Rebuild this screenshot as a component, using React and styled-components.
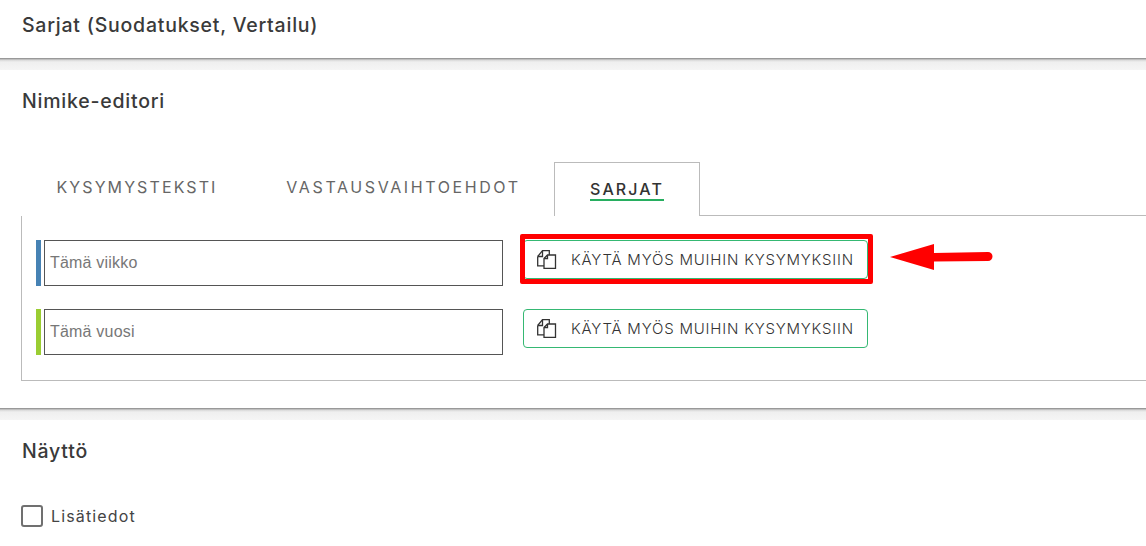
import React from "react";
import styled, { createGlobalStyle } from "styled-components";

const Global = createGlobalStyle`
  html, body { margin: 0; padding: 0; background: #fff; overflow: hidden; }
  body { font-family: Inter, "Liberation Sans", sans-serif; color: #333; }
`;
const Page = styled.div`
  position: relative;
  width: 1146px;
  height: 546px;
  overflow: hidden;
`;
const Section = styled.section`
  background: #fff;
  height: ${p => p.$h}px;
  padding: ${p => p.$top}px 0 0 22px;
  box-sizing: border-box;
`;
const Divider = styled.div`
  height: 12px;
  background: linear-gradient(#a8a8a8 0, #d8d8d8 1px, #efefef 3px, #f5f5f5 100%);
  border-top: 1px solid #999;
  box-sizing: border-box;
`;
const Title = styled.h2`
  margin: 0;
  font-size: 19.5px;
  line-height: 22px;
  font-weight: 500;
  color: #3a3a3a;
  letter-spacing: 0.77px;
`;
const Tabs = styled.div`
  display: flex;
  margin: 50px 0 0 0;
  height: 54px;
  align-items: stretch;
`;
const Tab = styled.div`
  box-sizing: border-box;
  width: ${p => p.$w}px;
  margin-left: ${p => p.$ml || 0}px;
  height: 54px;
  text-align: center;
  font-size: 16px;
  letter-spacing: ${p => p.$spacing || 2.1}px;
  padding-top: 16px;
  line-height: 19px;
  color: ${p => (p.$active ? "#333" : "#666")};
  font-weight: ${p => (p.$active ? 500 : 400)};
  background: #fff;
  position: relative;
  ${p => p.$active && "border: 1px solid #bbb; border-bottom: none; z-index: 1;"}
`;
const TabLabel = styled.span`
  display: inline-block;
  ${p => p.$active && "border-bottom: 2px solid #27ae60; line-height: 20px;"}
`;
const Panel = styled.div`
  box-sizing: border-box;
  margin: -1px 0 0 -1px;
  height: 166px;
  border: 1px solid #bbb;
  border-right: none;
  padding: 24px 0 0 14px;
  display: flex;
  flex-direction: column;
  gap: 23px;
`;
const Row = styled.div`
  display: flex;
  align-items: flex-start;
`;
const ColorBar = styled.div`
  width: 5px;
  height: 46px;
  background: ${p => p.$color};
  margin-right: 3px;
`;
const NameInput = styled.div`
  box-sizing: border-box;
  width: 459px;
  height: 46px;
  border: 1px solid #555;
  display: flex;
  align-items: center;
  padding: 0 0 0 5px;
  font: 16px "Liberation Sans", Arial, sans-serif;
  letter-spacing: 0.2px;
  color: #777;
`;
const CopyButton = styled.button`
  box-sizing: border-box;
  margin-left: 20px;
  width: 345px;
  height: 39px;
  border: 1px solid #35b873;
  border-radius: 4px;
  background: #fff;
  display: flex;
  align-items: center;
  padding: 0 0 0 13px;
  gap: 14px;
  font-family: Inter, sans-serif;
  font-size: 15px;
  font-weight: 300;
  letter-spacing: 0.8px;
  color: #333;
  white-space: nowrap;
`;
const CheckRow = styled.label`
  display: flex;
  align-items: center;
  gap: 8px;
  margin-top: 43px;
  margin-left: -1px;
  font-size: 16px;
  letter-spacing: 1.15px;
  color: #444;
`;
const CheckBox = styled.span`
  box-sizing: border-box;
  width: 22px;
  height: 22px;
  border: 2px solid #707070;
  border-radius: 3px;
`;
const Highlight = styled.div`
  position: absolute;
  left: 520px;
  top: 234px;
  width: 353px;
  height: 50px;
  box-sizing: border-box;
  border: 5px solid #f00;
  border-radius: 2px;
`;
const Arrow = styled.svg`
  position: absolute;
  left: 888px;
  top: 240px;
  width: 106px;
  height: 32px;
`;

const CopyIcon = () => (
  <svg width="20" height="20" viewBox="0 0 20 20" fill="none" stroke="#333" strokeWidth="1.3">
    <path d="M.7 6.5 5.5.7h6.8v4.5" fill="#fff" />
    <path d="M.7 6.5v9.3h6.3" />
    <path d="M.7 6.5h4.8V.7" />
    <path d="M7 8.5 10.5 5h8v13.3H7z" fill="#fff" />
    <path d="M7 8.5h3.5V5" />
  </svg>
);

const Copy = () => (
  <CopyButton>
    <CopyIcon />
    KÄYTÄ MYÖS MUIHIN KYSYMYKSIIN
  </CopyButton>
);

export default function App() {
  return (
    <Page>
      <Global />
      <Section $h={58} $top={14}>
        <Title>Sarjat (Suodatukset, Vertailu)</Title>
      </Section>
      <Divider />
      <Section $h={338} $top={20}>
        <Title>Nimike-editori</Title>
        <Tabs>
          <Tab $w={232} $ml={-1}><TabLabel>KYSYMYSTEKSTI</TabLabel></Tab>
          <Tab $w={301} $spacing={2.6}><TabLabel>VASTAUSVAIHTOEHDOT</TabLabel></Tab>
          <Tab $w={146} $active><TabLabel $active>SARJAT</TabLabel></Tab>
        </Tabs>
        <Panel>
          <Row>
            <ColorBar $color="#4682b4" />
            <NameInput>Tämä viikko</NameInput>
            <Copy />
          </Row>
          <Row>
            <ColorBar $color="#9acd32" />
            <NameInput>Tämä vuosi</NameInput>
            <Copy />
          </Row>
        </Panel>
      </Section>
      <Divider />
      <Section $h={126} $top={20}>
        <Title>Näyttö</Title>
        <CheckRow>
          <CheckBox />
          Lisätiedot
        </CheckRow>
      </Section>
      <Highlight />
      <Arrow viewBox="0 0 106 32" fill="#f00">
        <path d="M2 17 46 4v9l54-1a4.5 4.5 0 0 1 0 9l-54 .5V30z" />
      </Arrow>
    </Page>
  );
}
